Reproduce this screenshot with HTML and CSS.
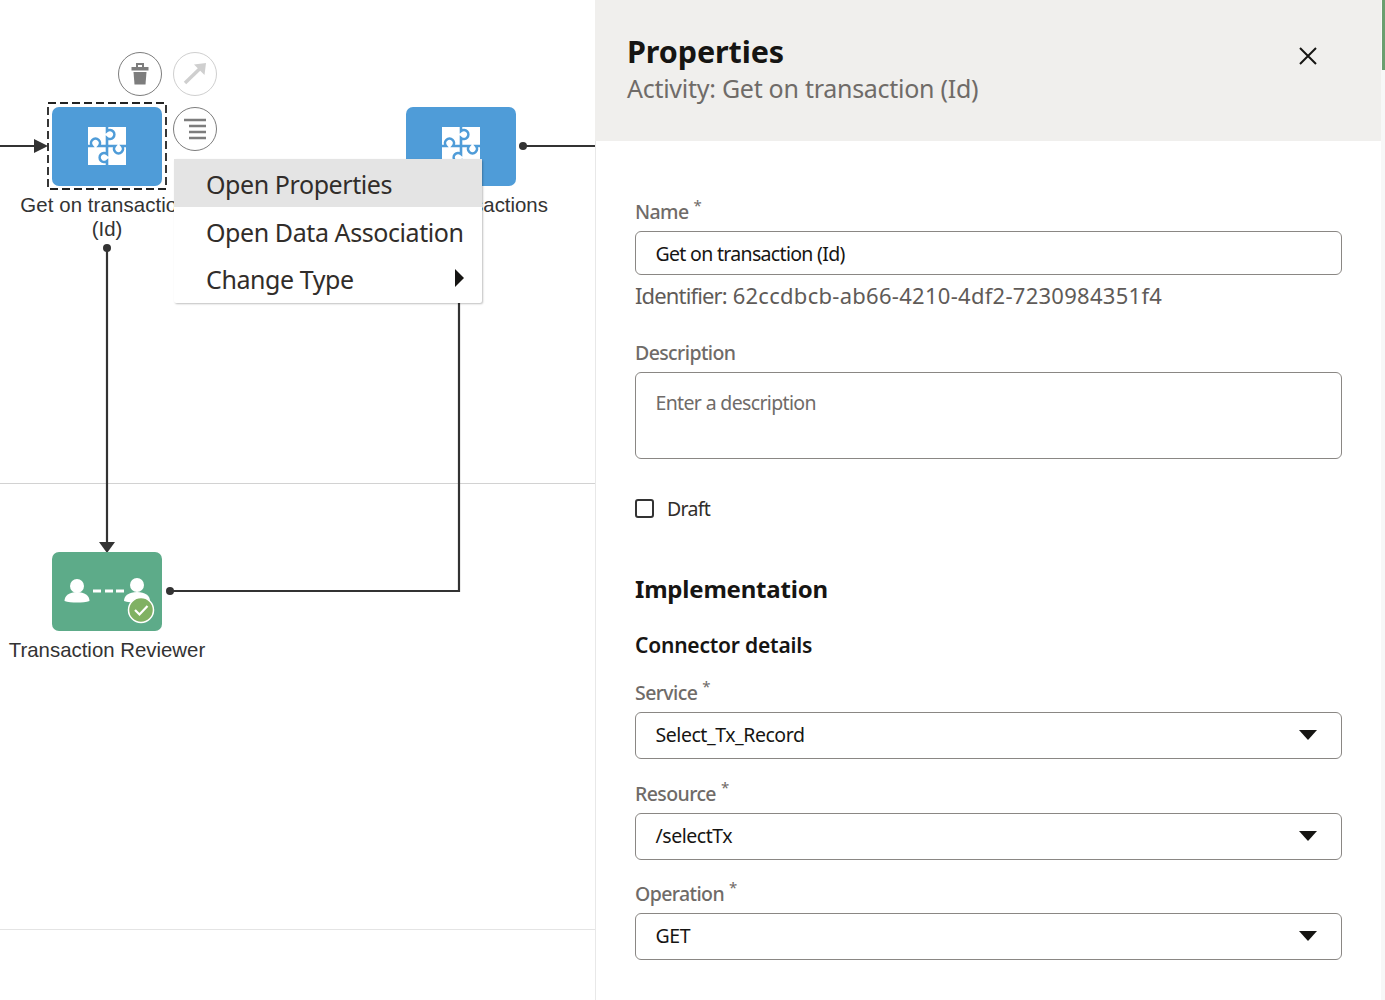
FILE: index.html
```html
<!DOCTYPE html>
<html lang="en">
<head>
<meta charset="utf-8">
<title>Properties</title>
<link rel="stylesheet" href="styles.css">
</head>
<body>
<div class="app">
  <section class="canvas">
    <div class="lane lane-a"></div>
    <div class="lane lane-b"></div>
    <svg class="wires" width="595" height="1000" viewBox="0 0 595 1000">
      <path d="M0 146H36" class="wire"/>
      <path d="M34 139l14 7-14 7z" class="head"/>
      <path d="M107 248V544" class="wire"/>
      <path d="M99 542h16l-8 11z" class="head"/>
      <path d="M170 591H459V300" class="wire"/>
      <path d="M523 146H595" class="wire"/>
      <circle cx="107" cy="248" r="4" class="head"/>
      <circle cx="170" cy="591" r="4" class="head"/>
      <circle cx="523" cy="146" r="4" class="head"/>
    </svg>

    <svg class="selection" width="120" height="88" viewBox="0 0 120 88">
      <rect x="1" y="1" width="118" height="86" class="selection-rect"/>
    </svg>
    <div class="node node-blue node-first">
      <svg class="puzzle" viewBox="0 0 38 38" width="38" height="38"><use href="#puzzle"/></svg>
    </div>
    <div class="node node-blue node-second">
      <svg class="puzzle" viewBox="0 0 38 38" width="38" height="38"><use href="#puzzle"/></svg>
    </div>
    <div class="node node-green node-third">
      <svg viewBox="0 0 110 78" width="110" height="78">
        <circle cx="25" cy="34" r="7" fill="#fff"/>
        <path d="M12.500 49c0-5.500 5-9 12.500-9s12.500 3.500 12.500 9c-3 1.500-8 1.500-12.500 1.500s-9.500 0-12.500-1.500z" fill="#fff"/>
        <path d="M41 39h8M53 39h8M64 39h8" stroke="#fff" stroke-width="3" fill="none"/>
        <circle cx="85" cy="33" r="7" fill="#fff"/>
        <path d="M72 49c0-5.500 5-9 13-9s13 3.500 13 9c-3 1.500-8 1.500-13 1.500s-10 0-13-1.500z" fill="#fff"/>
        <circle cx="89" cy="58" r="12.500" fill="#80b163" stroke="#fff" stroke-width="1.500"/>
        <path d="M83 58l4.500 4.500 8-8.500" stroke="#fff" stroke-width="2.200" fill="none"/>
      </svg>
    </div>

    <div class="node-label label-first"><span class="label-line">Get on transaction</span><br>(Id)</div>
    <div class="node-label label-second">Get on transactions</div>
    <div class="node-label label-third">Transaction Reviewer</div>

    <button class="round round-delete" aria-label="Delete">
      <svg viewBox="0 0 44 44" width="44" height="44"><path fill-rule="evenodd" d="M18 15v-4h8v4h4.500v3.500h-17V15zM20 15h4v-2h-4z" fill="#7d7d7d"/><path d="M15.500 20h13l-1 12.500h-11z" fill="#7d7d7d"/></svg>
    </button>
    <button class="round round-link" aria-label="Link">
      <svg viewBox="0 0 44 44" width="44" height="44"><path d="M12 31l15-14.500" stroke="#cfcfcf" stroke-width="3.500" fill="none"/><path d="M21 12.500L33 11l-1.500 12z" fill="#cfcfcf"/></svg>
    </button>
    <button class="round round-menu" aria-label="Menu">
      <svg viewBox="0 0 44 44" width="44" height="44"><path d="M11 13h22M16 19h17M16 25h17M16 31h17" stroke="#7d7d7d" stroke-width="2.300" fill="none"/></svg>
    </button>

    <div class="menu">
      <div class="menu-item menu-item-active">Open Properties</div>
      <div class="menu-item">Open Data Association</div>
      <div class="menu-item menu-item-sub">Change Type<span class="caret-right"></span></div>
    </div>

    <svg class="defs" width="0" height="0">
      <defs>
        <g id="puzzle">
          <path d="M0 0h38v38H0z" fill="#fff"/>
          <g fill="none" stroke="#4f9cd8" stroke-width="2.600">
            <path d="M19 0v4a4.500 4.500 0 1 1 0 7V19"/>
            <path d="M19 0v4a4.500 4.500 0 1 1 0 7V19" transform="rotate(90 19 19)"/>
            <path d="M19 0v4a4.500 4.500 0 1 1 0 7V19" transform="rotate(180 19 19)"/>
            <path d="M19 0v4a4.500 4.500 0 1 1 0 7V19" transform="rotate(270 19 19)"/>
          </g>
        </g>
      </defs>
    </svg>
  </section>

  <aside class="panel">
    <header class="panel-head">
      <div class="panel-titles">
        <h1 class="panel-title">Properties</h1>
        <p class="panel-sub">Activity: Get on transaction (Id)</p>
      </div>
      <button class="close" aria-label="Close">
        <svg viewBox="0 0 20 20" width="20" height="20"><path d="M2 2l16 16M18 2L2 18" stroke="#161513" stroke-width="2" fill="none"/></svg>
      </button>
    </header>

    <form class="form">
      <div class="field field-name">
        <div class="label">Name<sup class="req">*</sup></div>
        <div class="input input-text">Get on transaction (Id)</div>
        <div class="identifier"><span class="id-key">Identifier:</span> <span class="id-val">62ccdbcb-ab66-4210-4df2-7230984351f4</span></div>
      </div>
      <div class="field field-desc">
        <div class="label">Description</div>
        <div class="input input-area">Enter a description</div>
      </div>
      <label class="draft"><span class="checkbox"></span>Draft</label>

      <h2 class="section-title">Implementation</h2>
      <h3 class="sub-title">Connector details</h3>

      <div class="select-group">
        <div class="field">
          <div class="label">Service<sup class="req">*</sup></div>
          <div class="input input-select">Select_Tx_Record<span class="caret-down"></span></div>
        </div>
        <div class="field">
          <div class="label">Resource<sup class="req">*</sup></div>
          <div class="input input-select">/selectTx<span class="caret-down"></span></div>
        </div>
        <div class="field">
          <div class="label">Operation<sup class="req">*</sup></div>
          <div class="input input-select">GET<span class="caret-down"></span></div>
        </div>
      </div>
    </form>
    <div class="scroll-track"></div>
    <div class="scroll-thumb"></div>
  </aside>
</div>
</body>
</html>
```
FILE: styles.css
```css
* { box-sizing: border-box; }
html, body { margin: 0; height: 100%; overflow: hidden; background: #fff; }
body { font-family: "Noto Sans", "Open Sans", sans-serif; color: #161513; }
.app { display: flex; width: 1385px; height: 1000px; }

.canvas { position: relative; width: 595px; height: 1000px; flex: none; overflow: hidden; }
.lane { position: absolute; left: 0; width: 595px; height: 1px; background: #d2d2d2; }
.lane-a { top: 483px; }
.lane-b { top: 929px; background: #e4e4e4; }
.wires { position: absolute; left: 0; top: 0; }
.wire { fill: none; stroke: #333; stroke-width: 2.200; }
.head { fill: #333; }
.defs { position: absolute; }

.selection { position: absolute; left: 47px; top: 102px; }
.selection-rect { fill: none; stroke: #222; stroke-width: 1.800; stroke-dasharray: 8 4; }
.node { position: absolute; width: 110px; height: 78.500px; border-radius: 7px; display: flex; align-items: center; justify-content: center; }
.node-blue { background: #4f9cd8; }
.node-green { background: #5dab89; }
.node-first { left: 52px; top: 107px; }
.node-second { left: 406px; top: 107px; }
.node-third { left: 52px; top: 552px; }

.node-label { position: absolute; width: 200px; font: 20.400px/24px "Liberation Sans", Arial, sans-serif; color: #333; text-align: center; white-space: nowrap; }
.label-first { left: 7px; top: 193px; }
.label-line { margin-right: 5px; letter-spacing: .1px; }
.label-second { left: 359.500px; top: 193px; }
.label-third { left: 7px; top: 638px; }

.round { position: absolute; width: 44px; height: 44px; padding: 0; background: #fff; border: 1.500px solid #7d7d7d; border-radius: 50%; display: flex; align-items: center; justify-content: center; overflow: hidden; }
.round svg { flex: none; }
.round-delete { left: 118px; top: 52px; }
.round-link { left: 173px; top: 52px; border-color: #cfcfcf; }
.round-menu { left: 173px; top: 107px; }

.menu { position: absolute; left: 174px; top: 159px; width: 308px; height: 144px; background: #fff; border-radius: 2px; box-shadow: 1px 1px 2px rgba(0,0,0,.25); }
.menu-item { height: 47px; padding-left: 32px; font-size: 25px; letter-spacing: -.42px; line-height: 50px; color: #312d2a; white-space: nowrap; position: relative; }
.menu-item-active { height: 48px; background: #e4e4e4; }
.caret-right { position: absolute; left: 281px; top: 15px; width: 0; height: 0; border-left: 9px solid #161513; border-top: 9px solid transparent; border-bottom: 9px solid transparent; }

.panel { position: relative; width: 790px; height: 1000px; flex: none; }
.panel-head { height: 141px; width: 786px; background: #f0efed; padding: 32px 32px 0 32px; display: flex; justify-content: space-between; }
.panel-title { margin: 0; font-size: 30.500px; letter-spacing: -.1px; line-height: 38px; font-weight: 700; color: #161513; }
.panel-sub { margin: 0; font-size: 25px; letter-spacing: -.27px; line-height: 36px; color: #6f6b68; }
.close { width: 20px; height: 20px; padding: 0; border: 0; background: none; margin: 14px 31px 0 0; }
.scroll-track { position: absolute; left: 786px; top: 0; width: 4px; height: 1000px; background: #f7f7f7; }
.scroll-thumb { position: absolute; left: 787px; top: 0; width: 3px; height: 70px; background: #6a9f6f; }

.form { width: 786px; height: 859px; padding: 0 39px 0 39px; border-left: 1px solid #e8e8e8; }
.field { display: flex; flex-direction: column; }
.label { font-size: 19.500px; letter-spacing: -.6px; line-height: 26px; font-weight: 500; color: #6f6b68; }
.req { font-size: 15px; line-height: 0; font-weight: 400; margin-left: 5px; vertical-align: 8px; }
.input { border: 1.500px solid #8a8784; border-radius: 6px; font-size: 19.500px; letter-spacing: -.45px; color: #161513; padding-left: 19.500px; background: #fff; }
.input-text { height: 44px; line-height: 44px; margin-top: 6px; letter-spacing: -.68px; }
.identifier { font-size: 22px; line-height: 30px; margin-top: 5px; color: #5f5b58; }
.id-key { letter-spacing: -.85px; }
.id-val { letter-spacing: .28px; }
.field-name { padding-top: 58px; }
.field-desc { margin-top: 30px; }
.input-area { height: 87px; line-height: 26px; padding-top: 17px; margin-top: 6px; color: #6f6b68; letter-spacing: -.65px; }
.draft { display: flex; align-items: center; gap: 13px; margin-top: 37px; font-size: 19.500px; letter-spacing: -.7px; line-height: 26px; color: #312d2a; }
.checkbox { width: 19px; height: 19px; border: 2px solid #333; border-radius: 3px; margin-bottom: 2px; }
.section-title { margin: 49px 0 0; font-size: 24px; letter-spacing: -.2px; line-height: 36px; font-weight: 700; }
.sub-title { margin: 23px 0 0; font-size: 21px; letter-spacing: -.2px; line-height: 30px; font-weight: 600; }
.select-group { display: flex; flex-direction: column; gap: 21.500px; margin-top: 20px; }
.input-select { position: relative; height: 47px; line-height: 44px; margin-top: 6px; }
.caret-down { position: absolute; right: 24px; top: 17px; width: 0; height: 0; border-top: 10px solid #161513; border-left: 9px solid transparent; border-right: 9px solid transparent; }
```
